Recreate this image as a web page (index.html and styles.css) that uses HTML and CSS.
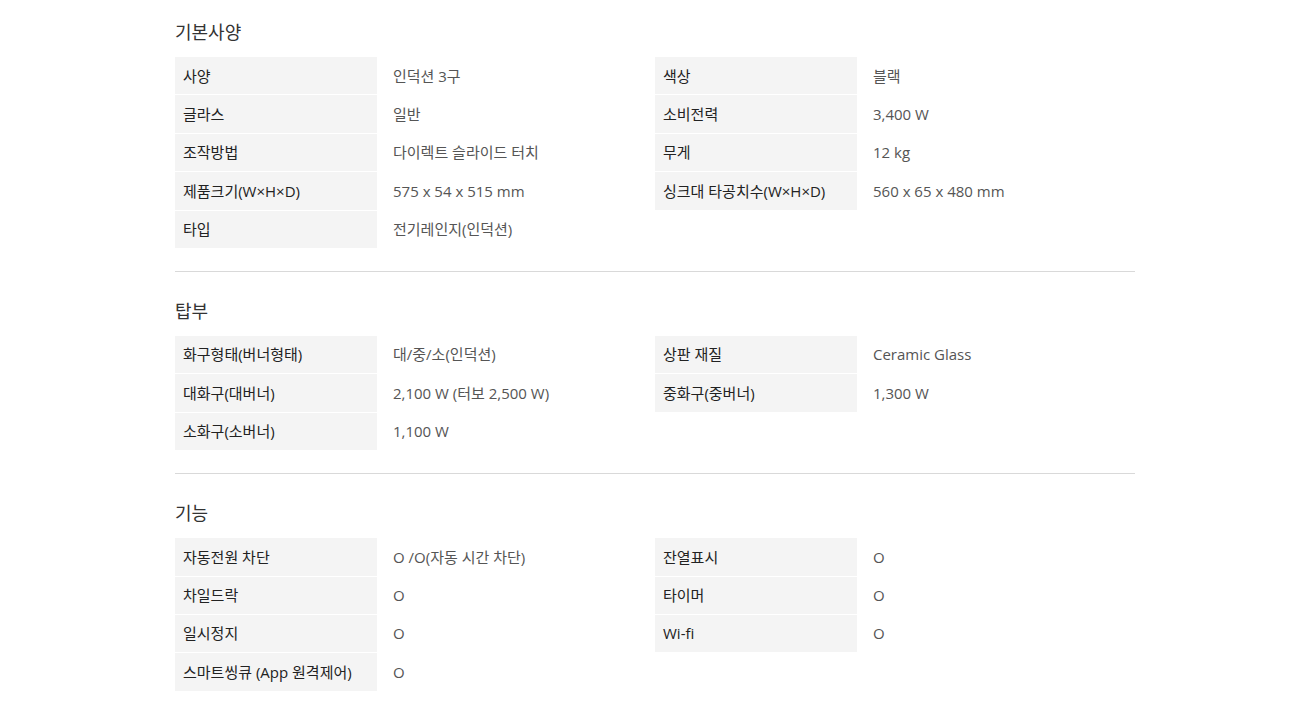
FILE: index.html
```html
<!DOCTYPE html>
<html lang="ko">
<head>
<meta charset="utf-8">
<link rel="stylesheet" href="styles.css">
</head>
<body>
<div class="spec">
  <section class="group">
    <h3 class="group-title">기본사양</h3>
    <div class="grid">
      <div class="k">사양</div><div class="v">인덕션 3구</div><div class="k">색상</div><div class="v">블랙</div>
      <div class="k">글라스</div><div class="v">일반</div><div class="k">소비전력</div><div class="v">3,400 W</div>
      <div class="k">조작방법</div><div class="v">다이렉트 슬라이드 터치</div><div class="k">무게</div><div class="v">12 kg</div>
      <div class="k">제품크기(W×H×D)</div><div class="v">575 x 54 x 515 mm</div><div class="k">싱크대 타공치수(W×H×D)</div><div class="v">560 x 65 x 480 mm</div>
      <div class="k">타입</div><div class="v">전기레인지(인덕션)</div><div class="e"></div><div class="e"></div>
    </div>
  </section>
  <section class="group">
    <h3 class="group-title">탑부</h3>
    <div class="grid">
      <div class="k">화구형태(버너형태)</div><div class="v">대/중/소(인덕션)</div><div class="k">상판 재질</div><div class="v">Ceramic Glass</div>
      <div class="k">대화구(대버너)</div><div class="v">2,100 W (터보 2,500 W)</div><div class="k">중화구(중버너)</div><div class="v">1,300 W</div>
      <div class="k">소화구(소버너)</div><div class="v">1,100 W</div><div class="e"></div><div class="e"></div>
    </div>
  </section>
  <section class="group last">
    <h3 class="group-title">기능</h3>
    <div class="grid">
      <div class="k">자동전원 차단</div><div class="v">O /O(자동 시간 차단)</div><div class="k">잔열표시</div><div class="v">O</div>
      <div class="k">차일드락</div><div class="v">O</div><div class="k">타이머</div><div class="v">O</div>
      <div class="k">일시정지</div><div class="v">O</div><div class="k">Wi-fi</div><div class="v">O</div>
      <div class="k">스마트씽큐 (App 원격제어)</div><div class="v">O</div><div class="e"></div><div class="e"></div>
    </div>
  </section>
</div>
</body>
</html>
```
FILE: styles.css
```css
html, body {
  margin: 0;
  padding: 0;
  background: #fff;
}
body {
  font-family: "Open Sans", "Noto Sans CJK KR", sans-serif;
  color: #222;
}
.spec {
  width: 960px;
  margin: 0 auto;
  padding-right: 4px;
  padding-top: 17px;
}
.group {
  border-bottom: 1px solid #d9d9d9;
  padding-bottom: 22px;
  margin-bottom: 24px;
}
.group.last {
  border-bottom: none;
  padding-bottom: 0;
  margin-bottom: 0;
}
.group-title {
  margin: 0 0 12px;
  font-family: "Noto Sans CJK KR", sans-serif;
  font-size: 18px;
  font-weight: 400;
  line-height: 28px;
  color: #333;
}
.grid {
  display: grid;
  grid-template-columns: 202px 278px 202px 278px;
}
.k, .v, .e {
  font-size: 15px;
  line-height: 20px;
  padding: 8.5px 8px 8.9px;
  border-bottom: 1px solid #fff;
}
.k {
  background: #f4f4f4;
  color: #222;
}
.v {
  padding-left: 16px;
  color: #555;
}
```
